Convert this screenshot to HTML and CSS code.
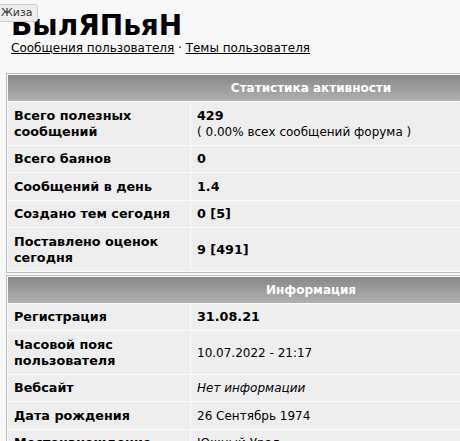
FILE: index.html
```html
<!DOCTYPE html>
<html lang="ru">
<head>
<meta charset="utf-8">
<title>БылЯПьяН</title>
<link rel="stylesheet" href="styles.css">
</head>
<body>
<div class="page">
  <div class="tip">Жиза</div>
  <h1 class="nick">БылЯПьяН</h1>
  <div class="links"><a href="#">Сообщения пользователя</a> · <a href="#">Темы пользователя</a></div>

  <table class="box">
    <colgroup><col class="c1"><col class="c2"></colgroup>
    <tr><th colspan="2">Статистика активности</th></tr>
    <tr><td class="label">Всего полезных сообщений</td><td class="val"><b>429</b><br>( 0.00% всех сообщений форума )</td></tr>
    <tr><td class="label">Всего баянов</td><td class="val"><b>0</b></td></tr>
    <tr><td class="label">Сообщений в день</td><td class="val"><b>1.4</b></td></tr>
    <tr><td class="label">Создано тем сегодня</td><td class="val"><b>0 [5]</b></td></tr>
    <tr><td class="label">Поставлено оценок сегодня</td><td class="val"><b>9 [491]</b></td></tr>
  </table>

  <table class="box">
    <colgroup><col class="c1"><col class="c2"></colgroup>
    <tr><th colspan="2">Информация</th></tr>
    <tr><td class="label">Регистрация</td><td class="val"><b>31.08.21</b></td></tr>
    <tr><td class="label">Часовой пояс пользователя</td><td class="val">10.07.2022 - 21:17</td></tr>
    <tr><td class="label">Вебсайт</td><td class="val"><i>Нет информации</i></td></tr>
    <tr><td class="label">Дата рождения</td><td class="val">26 Сентябрь 1974</td></tr>
    <tr><td class="label">Местонахождение</td><td class="val">Южный Урал</td></tr>
  </table>
</div>
</body>
</html>
```
FILE: styles.css
```css
html, body {
  margin: 0;
  padding: 0;
  background: #f8f8f8;
  overflow: hidden;
}
body {
  font-family: "DejaVu Sans", Verdana, sans-serif;
  font-size: 12px;
  color: #000;
}
.page {
  position: relative;
  padding: 0 6px;
  width: 640px;
}
.tip {
  position: absolute;
  left: -5px;
  top: 4px;
  padding: 1px 4px 1px 5px;
  font-size: 11px;
  line-height: 14px;
  color: #333;
  background: #efefef;
  border: 1px solid #cfcfcf;
  border-radius: 3px;
  z-index: 2;
}
.nick {
  margin: 0;
  padding: 11px 0 0 5px;
  font-size: 28px;
  line-height: 30px;
  font-weight: bold;
}
.links {
  padding-left: 5px;
  font-size: 12px;
  line-height: 15px;
}
.links a {
  color: #000;
}
.box {
  width: 610px;
  border: 1px solid #bdbdbd;
  border-spacing: 1px;
  background: #fbfbfb;
  table-layout: fixed;
}
.c1 {
  width: 182px;
}
.box + .box {
  margin-top: 2px;
}
.links + .box {
  margin-top: 17px;
}
.box th {
  height: 14px;
  padding: 6px;
  font-size: 12px;
  line-height: 14px;
  color: #fff;
  font-weight: bold;
  text-align: center;
  background: linear-gradient(#888888, #b0b0b0);
}
.box td {
  background: #eeeeee;
  padding: 5.5px 6px 5px;
  line-height: 16px;
  vertical-align: middle;
}
.label {
  font-weight: bold;
  font-size: 12.75px;
}
.val {
  padding-left: 5px;
}
.val b {
  font-size: 12.75px;
}
```
